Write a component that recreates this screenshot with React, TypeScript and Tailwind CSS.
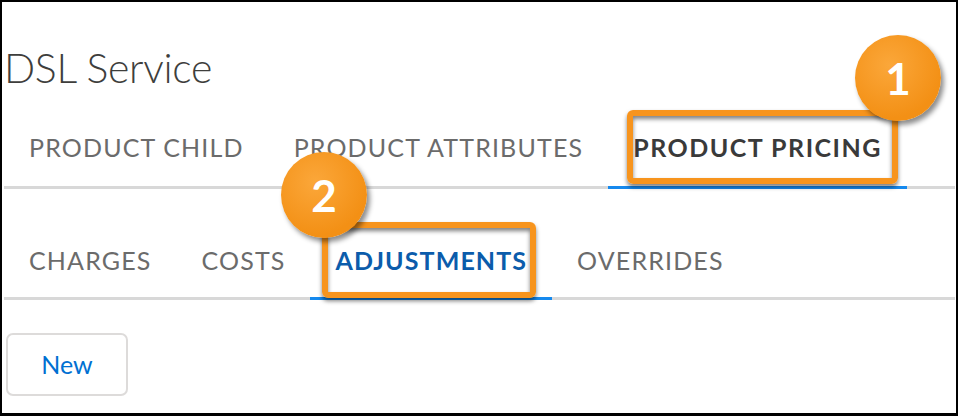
const tabs1 = ["PRODUCT CHILD", "PRODUCT ATTRIBUTES", "PRODUCT PRICING"];
const tabs2 = ["CHARGES", "COSTS", "ADJUSTMENTS", "OVERRIDES"];

function Badge({ n, className }: { n: string; className: string }) {
  return (
    <div
      className={`absolute flex items-center justify-center rounded-full bg-[radial-gradient(circle_at_40%_35%,#fba73a,#f39015_70%)] text-white font-bold text-[44px] leading-none shadow-[3px_4px_5px_rgba(0,0,0,0.45)] ${className}`}
    >
      {n}
    </div>
  );
}

export default function App() {
  return (
    <div
      className="relative w-[958px] h-[416px] overflow-hidden bg-white border-black border-t-2 border-l-2 border-r-2 border-b-[3px] pl-[2px] pr-[1px]"
      style={{ fontFamily: "Lato, 'Open Sans', sans-serif" }}
    >
      <h1 className="pt-[42px] text-[41px] leading-[48px] font-light text-[#3e3e3c] tracking-[-0.3px]">
        DSL Service
      </h1>

      {/* first tab level */}
      <div className="mt-[41px] flex border-b-[3px] border-[#d8d8d8]">
        {tabs1.map((t, i) => {
          const active = i === 2;
          return (
            <div
              key={t}
              className={`px-[25px] pb-[25px] text-[25px] leading-[28px] -mb-[3px] border-b-[3px] ${
                active
                  ? "font-bold tracking-[1.5px] text-[#3a3a3a] border-[#1589ee]"
                  : "tracking-[1.15px] text-[#6b6b6b] border-transparent"
              }`}
            >
              {t}
            </div>
          );
        })}
      </div>

      {/* second tab level */}
      <div className="mt-[57px] flex border-b-[3px] border-[#d8d8d8]">
        {tabs2.map((t, i) => {
          const active = i === 2;
          return (
            <div
              key={t}
              className={`px-[25px] pb-[23px] text-[25px] leading-[28px] -mb-[3px] border-b-[3px] ${
                active
                  ? "font-bold tracking-[1.1px] text-[#0b5cab] border-[#1589ee]"
                  : "tracking-[1.15px] text-[#6b6b6b] border-transparent"
              }`}
            >
              {t}
            </div>
          );
        })}
      </div>

      <button className="mt-[33px] ml-[2px] w-[122px] h-[63px] rounded-[7px] border-2 border-[#dddbda] bg-white text-[#0070d2] text-[25px]">
        New
      </button>

      {/* callouts */}
      <div className="absolute left-[625px] top-[108px] w-[271px] h-[74px] rounded-[6px] border-[6px] border-[#f7941d] shadow-[0_3px_4px_rgba(0,0,0,0.5),inset_0_3px_4px_rgba(0,0,0,0.5)]" />
      <div className="absolute left-[320px] top-[220px] w-[214px] h-[76px] rounded-[6px] border-[6px] border-[#f7941d] shadow-[0_3px_4px_rgba(0,0,0,0.5),inset_0_3px_4px_rgba(0,0,0,0.5)]" />
      <Badge n="1" className="left-[853px] top-[33px] w-[86px] h-[86px]" />
      <Badge n="2" className="left-[279px] top-[150px] w-[86px] h-[86px]" />
    </div>
  );
}
